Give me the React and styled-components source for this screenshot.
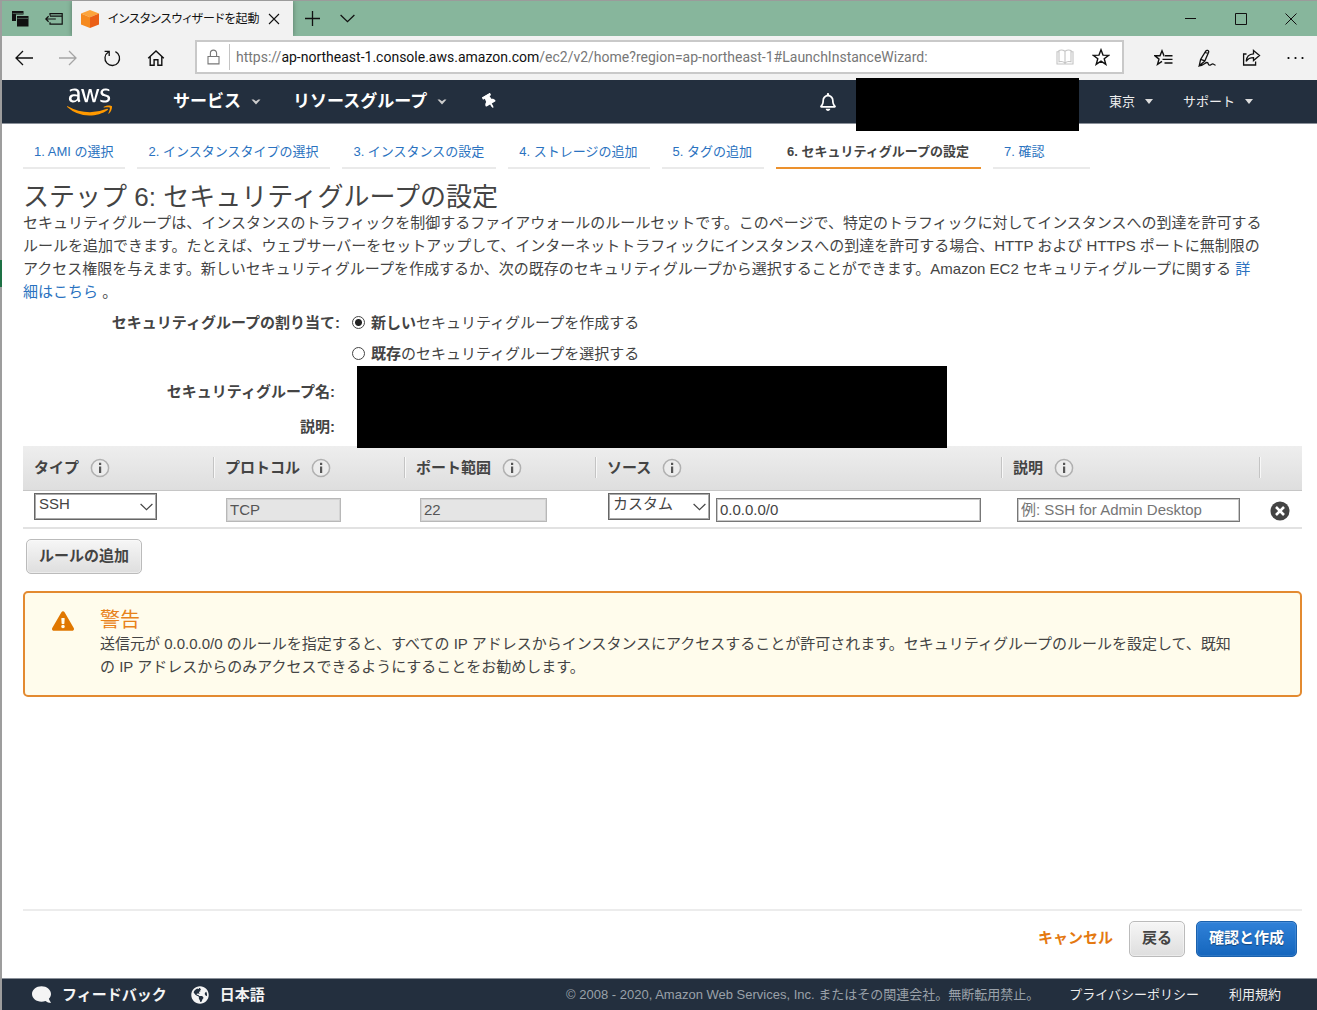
import React from "react";
import styled, { createGlobalStyle, css } from "styled-components";
import {
  FaAws,
  FaThumbtack,
  FaRegBell,
  FaComment,
  FaGlobeAmericas,
  FaExclamationTriangle,
} from "react-icons/fa";

const sans = `"Liberation Sans", "Noto Sans CJK JP", sans-serif`;
const ui = `"Open Sans", "Noto Sans CJK JP", sans-serif`;

const GlobalStyle = createGlobalStyle`
  *, *::before, *::after { box-sizing: border-box; }
  body { margin: 0; background: #fff; }
  button, input, select { font: inherit; color: inherit; margin: 0; }
  a { text-decoration: none; }
`;

const Window = styled.div`
  min-height: 100vh;
  display: flex;
  flex-direction: column;
  padding-left: 2px;
  border-top: 1px solid #9b9b9b;
  background: linear-gradient(#9d9d9d 0 259px, #1e7145 259px 286px, #9d9d9d 286px) 0 0 / 2px 100% no-repeat;
  font: 15px/23px ${sans};
  color: #444;
`;

/* ---------- browser chrome ---------- */

const TitleBar = styled.header`
  display: flex;
  align-items: stretch;
  height: 35px;
  background: #87b69c;
  color: #111;
`;

const TitleTools = styled.div`
  display: flex;
  width: 70px;
`;

const IconButton = styled.button`
  display: flex;
  flex: none;
  align-items: center;
  justify-content: center;
  width: ${(p) => p.$w || 44}px;
  padding: 0;
  border: 0;
  background: none;
  color: ${(p) => p.$color || "#111"};
`;

const BrowserTab = styled.div`
  display: flex;
  align-items: center;
  width: 221px;
  padding: 0 5px 0 8px;
  background: #f2f2f2;
  box-shadow: 0 0 5px rgba(0, 0, 0, 0.35);
  clip-path: inset(0 -6px 0 -6px);
`;

const TabTitle = styled.span`
  flex: 1;
  margin-left: 8px;
  white-space: nowrap;
  font: 12px/20px ${ui};
  font-feature-settings: "palt";
  color: #111;
`;

const WindowControls = styled.div`
  display: flex;
  margin: 0 1px 0 auto;
`;

const Toolbar = styled.div`
  display: flex;
  align-items: stretch;
  height: 44px;
  background: #f2f2f2;
`;

const AddressBar = styled.div`
  display: flex;
  flex: 1;
  min-width: 0;
  align-items: center;
  height: 34px;
  margin: 4px 17px;
  padding-right: 3px;
  border: 2px solid #c9c9c9;
  background: #fff;
`;

const LockSlot = styled.span`
  display: flex;
  align-items: center;
  justify-content: center;
  width: 33px;
  height: 26px;
  border-right: 1px solid #c4c4c4;
`;

const Url = styled.div`
  flex: 1;
  min-width: 0;
  padding-left: 6px;
  overflow: hidden;
  white-space: nowrap;
  font: 14px/20px Roboto, sans-serif;
  color: #777;

  b {
    font-weight: 400;
    color: #111;
  }
`;

/* ---------- console navigation ---------- */

const NavBar = styled.nav`
  display: flex;
  align-items: center;
  height: 44px;
  padding: 0 64px 0 65px;
  border-bottom: 1px solid #8a9099;
  background: #232f3e;
  color: #fff;
`;

const Logo = styled.a`
  display: flex;
  margin-right: 61px;

  svg {
    width: 45px;
    height: 36px;
    fill: url(#awsFill);
  }
`;

const NavItem = styled.button`
  display: flex;
  align-items: center;
  gap: 10px;
  padding: 0;
  border: 0;
  background: none;
  white-space: nowrap;
  ${(p) =>
    p.$small
      ? css`
          margin-left: 30px;
          font-size: 13px;
          color: #eee;
        `
      : css`
          margin-right: 32px;
          font-size: 17px;
          font-weight: 700;
          color: #fff;
        `}
`;

const NavEnd = styled.div`
  display: flex;
  align-items: center;
  margin-left: auto;
`;

const Account = styled.div`
  position: relative;
  width: 223px;
  height: 44px;
  margin-left: 19px;
`;

const Redaction = styled.div`
  position: absolute;
  inset: ${(p) => p.$inset};
  background: #000;
`;

/* ---------- wizard ---------- */

const Main = styled.main`
  display: flex;
  flex: 1;
  flex-direction: column;
  padding: 16px 15px 0 21px;
`;

const Steps = styled.ol`
  display: flex;
  gap: 12px;
  margin: 0 0 14px;
  padding: 0;
  list-style: none;
`;

const Step = styled.li`
  padding: 0 12px 3px 11px;
  border-bottom: 2px solid ${(p) => (p.$current ? "#ec912d" : "#eaeaea")};
  font-size: 13px;
  font-weight: ${(p) => (p.$current ? 700 : 400)};
  line-height: 24px;
  white-space: nowrap;

  &:last-child {
    padding-right: 46px;
  }
`;

const TextLink = styled.a`
  color: #2a72c0;
`;

const Title = styled.h1`
  margin: 0;
  font-size: 26px;
  font-weight: 400;
  line-height: 28px;
`;

const Lead = styled.p`
  margin: 0 0 4px;
`;

const Form = styled.div`
  margin-bottom: 2px;
`;

const Assign = styled.fieldset`
  display: grid;
  grid-template-columns: 317px 1fr;
  align-items: center;
  margin: 0 0 5px;
  padding: 0;
  border: 0;
  line-height: 31px;
`;

const Caption = styled.span`
  grid-row: 1;
  text-align: right;
  font-weight: 700;
`;

const Option = styled.label`
  display: flex;
  grid-column: 2;
  align-items: center;
  padding-left: 12px;

  input {
    appearance: none;
    width: 13px;
    height: 13px;
    margin: 0 6px 0 0;
    border: 1px solid #444;
    border-radius: 50%;
    background: #fff;
  }

  input:checked {
    background: radial-gradient(circle, #222 0 3px, #fff 4px);
  }
`;

const Details = styled.div`
  position: relative;
`;

const DetailRow = styled.div`
  width: 312px;
  line-height: 35px;
  text-align: right;
  font-weight: 700;
`;

const CoveredFields = styled.div`
  position: absolute;
  top: -8px;
  left: 334px;
  width: 590px;
  height: 82px;
  background: #000;
`;

const Rules = styled.table`
  width: 100%;
  table-layout: fixed;
  border-collapse: collapse;
`;

const HeadCell = styled.th`
  height: 44px;
  padding: 0;
  border-bottom: 1px solid #c6c6c6;
  background: linear-gradient(#eee, #dedede);
  text-align: left;
`;

const HeadLabel = styled.span`
  display: flex;
  align-items: center;
  gap: 11px;
  height: 21px;
  padding-left: 11px;
  border-left: ${(p) => (p.$first ? "0" : "1px solid #c4c4c4")};
  box-shadow: ${(p) => (p.$first ? "none" : "inset 1px 0 #f8f8f8")};
`;

const Cell = styled.td`
  height: 38px;
  padding: 2px 0 0 ${(p) => p.$pad}px;
  border-bottom: 2px solid #e2e2e2;
  vertical-align: top;
`;

const CellRow = styled.div`
  display: flex;
  align-items: flex-start;
  gap: 6px;
`;

const SelectBox = styled.span`
  display: block;
  position: relative;
  flex: none;
  width: ${(p) => p.$w}px;

  select {
    display: block;
    width: 100%;
    height: 27px;
    padding: 0 0 4px 4px;
    appearance: none;
    border: 1px solid #666;
    outline: 1px solid #aaa;
    outline-offset: -2px;
    border-radius: 0;
    background: #fff;
    line-height: 20px;
  }

  svg {
    position: absolute;
    right: 4px;
    top: 10px;
    pointer-events: none;
  }
`;

const Field = styled.input`
  display: block;
  width: ${(p) => p.$w};
  height: 24px;
  padding: 0 3px;
  border: 1px solid #777;
  outline: 1px solid #c8c8c8;
  outline-offset: -2px;
  border-radius: 0;
  background: #fff;

  &::placeholder {
    color: #757575;
  }

  &:disabled {
    border-color: #b8b8b8;
    outline-color: #d4d4d4;
    background: #e5e5e5;
    color: #555;
  }
`;

const FieldSlot = styled.div`
  display: flex;
  align-items: center;
  min-height: 24px;
  margin-top: 5px;
`;

const RemoveSlot = styled(FieldSlot)`
  min-height: 26px;
`;

const Button = styled.button`
  height: ${(p) => p.$h}px;
  padding: 0 12px 3px;
  border: 1px solid ${(p) => (p.$primary ? "#1a61ad" : "#bbb")};
  border-radius: 5px;
  background: ${(p) => (p.$primary ? "linear-gradient(#3081d8, #1566bd)" : "linear-gradient(#f6f6f6, #dedede)")};
  box-shadow: inset 0 0 0 1px ${(p) => (p.$primary ? "rgba(255,255,255,.1)" : "rgba(255,255,255,.4)")};
  color: ${(p) => (p.$primary ? "#fff" : "#444")};
  font-weight: 700;
  white-space: nowrap;
  text-shadow: ${(p) => (p.$primary ? "0 1px 1px rgba(0,0,0,.4)" : "none")};
`;

const AddRow = styled.div`
  display: flex;
  padding: 10px 3px 17px;
`;

const Warning = styled.section`
  display: flex;
  gap: 26px;
  padding: 15px 27px 17px;
  border: 2px solid #e38a30;
  border-radius: 5px;
  background: #fffcec;

  > svg {
    flex: none;
    margin-top: 2px;
    color: #e07700;
  }

  h2 {
    margin: 0;
    font-size: 20px;
    font-weight: 400;
    line-height: 24px;
    color: #e8821a;
  }

  p {
    margin: 0;
  }
`;

const Actions = styled.div`
  display: flex;
  align-items: center;
  justify-content: flex-end;
  gap: 11px;
  margin-top: auto;
  padding: 10px 5px 21px;
  border-top: 2px solid #ececec;
`;

const Cancel = styled.a`
  margin-right: 5px;
  padding-bottom: 3px;
  color: #e47911;
  font-weight: 700;
`;

const Footer = styled.footer`
  display: flex;
  align-items: center;
  height: 32px;
  padding: 0 36px 0 30px;
  border-top: 1px solid #8a9099;
  background: #232f3e;
  color: #eee;
  font-size: 13px;
`;

const FooterTool = styled.button`
  display: flex;
  align-items: center;
  gap: 11px;
  margin-right: 24px;
  padding: 0;
  border: 0;
  background: none;
  color: #f4f4f4;
  font-size: 15px;
  font-weight: 700;
  white-space: nowrap;
`;

const Legal = styled.small`
  margin-left: auto;
  color: #9aa1a9;
  font-size: 13px;
`;

const FooterLink = styled.a`
  margin-left: 30px;
  color: #eee;
`;

/* ---------- drawings ---------- */

function Line({ w = 18, h = 18, sw = 1.3, children, ...rest }) {
  return (
    <svg width={w} height={h} viewBox={`0 0 ${w} ${h}`} fill="none" stroke="currentColor" strokeWidth={sw} {...rest}>
      {children}
    </svg>
  );
}

const Caret = ({ solid }) =>
  solid ? (
    <svg width="8" height="5" viewBox="0 0 8 5" aria-hidden="true">
      <path d="M0 0h8L4 5z" fill="#ddd" />
    </svg>
  ) : (
    <svg width="10" height="6" viewBox="0 0 10 6" aria-hidden="true">
      <path d="M.5.5h2.2L5 2.300 7.300.5h2.200L5 5.500z" fill="#ccc" />
    </svg>
  );

const Chevron = () => (
  <Line w={13} h={8} sw={1.2}>
    <path d="M.6 1l5.9 5.6L12.4 1" stroke="#444" />
  </Line>
);

const Info = () => (
  <svg width="20" height="20" viewBox="0 0 20 20" role="img" aria-label="情報">
    <circle cx="10" cy="10" r="8.600" fill="#ececec" stroke="#b0b0b0" strokeWidth="1.500" />
    <path d="M9 8.400h2.200v6.600H9z M9 4.800h2.200v2.200H9z" fill="#555" />
  </svg>
);

const Cube = () => (
  <svg width="20" height="20" viewBox="0 0 20 20" aria-hidden="true">
    <path d="M10 1l9 3.4-9 3.8-9-3.8z" fill="#fca43c" />
    <path d="M1 4.4l9 3.8V19l-9-3.6z" fill="#f58a1f" />
    <path d="M19 4.4l-9 3.8V19l9-3.6z" fill="#ea5f17" />
  </svg>
);

const columns = ["タイプ", "プロトコル", "ポート範囲", "ソース", "説明"];
const steps = [
  "1. AMI の選択",
  "2. インスタンスタイプの選択",
  "3. インスタンスの設定",
  "4. ストレージの追加",
  "5. タグの追加",
  "6. セキュリティグループの設定",
  "7. 確認",
];

function BrowserChrome() {
  return (
    <>
      <TitleBar>
        <TitleTools>
          <IconButton $w={36} aria-label="保存したタブ">
            <svg width="17" height="16" viewBox="0 0 17 16">
              <path d="M0 0h11.5v3.6H4V10H0z" fill="#111" />
              <path d="M5 5h11.5v10.5H5z" fill="#111" />
              <path d="M5.4 7.4h10.8M.6 2.4h10.6" stroke="#6f9580" strokeWidth=".6" />
            </svg>
          </IconButton>
          <IconButton $w={32} aria-label="タブを保存して閉じる">
            <Line w={18} h={14} sw={1.2}>
              <path d="M5 3.5V1.6h12.2v10.6H5v-2M5 4.2h12M.8 7h10M3.6 4.3L.8 7l2.8 2.7" />
            </Line>
          </IconButton>
        </TitleTools>
        <BrowserTab>
          <Cube />
          <TabTitle>インスタンスウィザードを起動</TabTitle>
          <IconButton $w={28} aria-label="タブを閉じる">
            <Line w={12} h={12} sw={1.1}><path d="M1 1l10 10M11 1L1 11" /></Line>
          </IconButton>
        </BrowserTab>
        <IconButton $w={38} aria-label="新しいタブ">
          <Line w={15} h={15}><path d="M7.5 0v15M0 7.5h15" /></Line>
        </IconButton>
        <IconButton $w={32} aria-label="タブプレビュー">
          <Line w={15} h={9}><path d="M.6 1l6.9 6.6L14.4 1" /></Line>
        </IconButton>
        <WindowControls>
          <IconButton $w={50} aria-label="最小化">
            <Line w={11} h={11} sw={1}><path d="M0 5.5h11" /></Line>
          </IconButton>
          <IconButton $w={51} aria-label="最大化">
            <Line w={12} h={12} sw={1}><path d="M.5.5h11v11H.5z" /></Line>
          </IconButton>
          <IconButton $w={50} aria-label="閉じる">
            <Line w={12} h={12} sw={1}><path d="M.5.5l11 11M11.5.5l-11 11" /></Line>
          </IconButton>
        </WindowControls>
      </TitleBar>

      <Toolbar>
        <IconButton aria-label="戻る">
          <Line w={18} h={16}><path d="M1 8h17M8 1L1 8l7 7" /></Line>
        </IconButton>
        <IconButton $color="#a5a5a5" aria-label="進む">
          <Line w={18} h={16}><path d="M0 8h17M10 1l7 7-7 7" /></Line>
        </IconButton>
        <IconButton aria-label="更新">
          <Line w={18} h={18}>
            <path d="M5.4 3A7.3 7.3 0 1 0 12.4 2.6M1.6 2.3h4.6v4.6" />
          </Line>
        </IconButton>
        <IconButton aria-label="ホーム">
          <Line w={18} h={18} sw={1.4}>
            <path d="M1.2 9.3L9 2l7.8 7.3M3.2 7.6v8.7h3.9v-5.6h3.8v5.6h3.9V7.6" />
          </Line>
        </IconButton>
        <AddressBar>
          <LockSlot>
            <Line w={13} h={16} sw={1.1} stroke="#777">
              <path d="M1 7.5h11v7.4H1zM3.4 7.5V4.2a3.1 3.1 0 0 1 6.2 0v3.3" />
            </Line>
          </LockSlot>
          <Url>
            https://<b>ap-northeast-1.console.aws.amazon.com</b>/ec2/v2/home?region=ap-northeast-1#LaunchInstanceWizard:
          </Url>
          <IconButton $w={36} $color="#c4c4c4" aria-label="読み取りビュー">
            <Line w={18} h={16} sw={1.1}>
              <path d="M9 2.2v12M9 2.2C7 .9 4.5 .9 3 1.4v11.4c2-.5 4.4-.3 6 1.2 1.6-1.5 4-1.7 6-1.2V1.4c-1.5-.5-4-.5-6 .8M3 2.8H1v12.200h16V2.8h-2" />
            </Line>
          </IconButton>
          <IconButton $w={36} aria-label="お気に入りに追加">
            <Line w={18} h={18} sw={1.4}>
              <path d="M9 1.800l2 5.300 5.700.2-4.500 3.500 1.600 5.500L9 13.100l-4.800 3.200 1.600-5.500L1.300 7.300l5.700-.2z" />
            </Line>
          </IconButton>
        </AddressBar>
        <IconButton aria-label="ハブ">
          <Line w={19} h={18} sw={1.4}>
            <path d="M10.5 6.8H10l-2-5-2 5H1l4 3.3-1.500 5.300L8 12.400M11 6.800h7.500M8.500 10.400h10M10.500 14h8" />
          </Line>
        </IconButton>
        <IconButton aria-label="メモの追加">
          <Line w={18} h={18} sw={1.3}>
            <path d="M1.200 16.800L2.600 10.500 7.600 2.300c1-1.700 3.600-1 3 1L6.800 12 1.200 16.800zM2.800 10.300l3.800 1.600M7 3.500l3.400 1M1.200 16.800c4 0 5.800-3.300 7.800-3.300s.6 2.700 2.300 2.700 2.200-1.400 3.400-1.400 1.200 1.500 2.800 1.200" />
          </Line>
        </IconButton>
        <IconButton aria-label="共有">
          <Line w={19} h={18} sw={1.3}>
            <path d="M4.500 5H1.600v11h12v-3.500M11.500 1.500l6 5-6 5V8.600c-3.500 0-5.600 1-7.300 3.700.3-4.500 2.800-7.300 7.300-7.500z" />
          </Line>
        </IconButton>
        <IconButton aria-label="設定など">
          <svg width="17" height="4" viewBox="0 0 17 4">
            <circle cx="1.500" cy="2" r="1.100" />
            <circle cx="8.500" cy="2" r="1.100" />
            <circle cx="15.500" cy="2" r="1.100" />
          </svg>
        </IconButton>
      </Toolbar>
    </>
  );
}

const Defs = styled.svg`
  position: absolute;
`;

function ConsoleNav() {
  return (
    <NavBar>
      <Defs width="0" height="0" aria-hidden="true">
        <defs>
          <linearGradient id="awsFill" x1="0" y1="0" x2="0" y2="1">
            <stop offset="0.58" stopColor="#fff" />
            <stop offset="0.58" stopColor="#f90" />
          </linearGradient>
        </defs>
      </Defs>
      <Logo href="#home" aria-label="AWS">
        <FaAws />
      </Logo>
      <NavItem>サービス <Caret /></NavItem>
      <NavItem>リソースグループ <Caret /></NavItem>
      <IconButton $w={20} $color="#fff" aria-label="ピン留め">
        <FaThumbtack size={15} transform="rotate(-30)" />
      </IconButton>
      <NavEnd>
        <IconButton $w={18} $color="#fff" aria-label="通知">
          <FaRegBell size={18} />
        </IconButton>
        <Account>
          <Redaction $inset="-2px 0 -7px 0" />
        </Account>
        <NavItem $small>東京 <Caret solid /></NavItem>
        <NavItem $small>サポート <Caret solid /></NavItem>
      </NavEnd>
    </NavBar>
  );
}

function RuleTable() {
  return (
    <Rules>
      <colgroup>
        <col width="190" />
        <col width="191" />
        <col width="191" />
        <col />
        <col width="258" />
        <col width="43" />
      </colgroup>
      <thead>
        <tr>
          {columns.map((name, i) => (
            <HeadCell key={name} scope="col">
              <HeadLabel $first={i === 0}>{name} <Info /></HeadLabel>
            </HeadCell>
          ))}
          <HeadCell aria-label="削除"><HeadLabel /></HeadCell>
        </tr>
      </thead>
      <tbody>
        <tr>
          <Cell $pad={11}>
            <SelectBox $w={123}>
              <select aria-label="タイプ" defaultValue="SSH"><option>SSH</option></select>
              <Chevron />
            </SelectBox>
          </Cell>
          <Cell $pad={13}><FieldSlot><Field $w="115px" aria-label="プロトコル" defaultValue="TCP" disabled /></FieldSlot></Cell>
          <Cell $pad={16}><FieldSlot><Field $w="127px" aria-label="ポート範囲" defaultValue="22" disabled /></FieldSlot></Cell>
          <Cell $pad={13}>
            <CellRow>
              <SelectBox $w={102}>
                <select aria-label="ソース" defaultValue="カスタム"><option>カスタム</option></select>
                <Chevron />
              </SelectBox>
              <FieldSlot><Field $w="265px" aria-label="CIDR" defaultValue="0.0.0.0/0" /></FieldSlot>
            </CellRow>
          </Cell>
          <Cell $pad={16}><FieldSlot><Field $w="223px" aria-label="説明" placeholder="例: SSH for Admin Desktop" /></FieldSlot></Cell>
          <Cell $pad={11}>
            <RemoveSlot>
              <IconButton $w={20} aria-label="ルールを削除">
                <svg width="20" height="20" viewBox="0 0 20 20">
                  <circle cx="10" cy="10" r="9.500" fill="#444" />
                  <path d="M6 6l8 8M14 6l-8 8" stroke="#fff" strokeWidth="2.600" />
                </svg>
              </IconButton>
            </RemoveSlot>
          </Cell>
        </tr>
      </tbody>
    </Rules>
  );
}

export default function App() {
  return (
    <Window>
      <GlobalStyle />
      <BrowserChrome />
      <ConsoleNav />
      <Main>
        <Steps>
          {steps.map((s, i) => (
            <Step key={s} $current={i === 5}>
              {i === 5 ? s : <TextLink href={`#step${i + 1}`}>{s}</TextLink>}
            </Step>
          ))}
        </Steps>
        <Title>ステップ 6: セキュリティグループの設定</Title>
        <Lead>
          セキュリティグループは、インスタンスのトラフィックを制御するファイアウォールのルールセットです。このページで、特定のトラフィックに対してインスタンスへの到達を許可する<br />
          ルールを追加できます。たとえば、ウェブサーバーをセットアップして、インターネットトラフィックにインスタンスへの到達を許可する場合、HTTP および HTTPS ポートに無制限の<br />
          アクセス権限を与えます。新しいセキュリティグループを作成するか、次の既存のセキュリティグループから選択することができます。Amazon EC2 セキュリティグループに関する{" "}
          <TextLink href="#learn">詳<br />細はこちら</TextLink> 。
        </Lead>

        <Form>
          <Assign aria-labelledby="assign">
            <Caption id="assign">セキュリティグループの割り当て:</Caption>
            <Option><input type="radio" name="group" defaultChecked /><span><b>新しい</b>セキュリティグループを作成する</span></Option>
            <Option><input type="radio" name="group" /><span><b>既存</b>のセキュリティグループを選択する</span></Option>
          </Assign>
          <Details>
            <DetailRow>セキュリティグループ名:</DetailRow>
            <DetailRow>説明:</DetailRow>
            <CoveredFields />
          </Details>
        </Form>

        <RuleTable />
        <AddRow><Button $h={35}>ルールの追加</Button></AddRow>

        <Warning>
          <FaExclamationTriangle size={22} />
          <div>
            <h2>警告</h2>
            <p>
              送信元が 0.0.0.0/0 のルールを指定すると、すべての IP アドレスからインスタンスにアクセスすることが許可されます。セキュリティグループのルールを設定して、既知<br />
              の IP アドレスからのみアクセスできるようにすることをお勧めします。
            </p>
          </div>
        </Warning>

        <Actions>
          <Cancel href="#cancel">キャンセル</Cancel>
          <Button $h={36}>戻る</Button>
          <Button $h={36} $primary>確認と作成</Button>
        </Actions>
      </Main>
      <Footer>
        <FooterTool><FaComment size={19} transform="scale(-1 1)" /> フィードバック</FooterTool>
        <FooterTool><FaGlobeAmericas size={18} /> 日本語</FooterTool>
        <Legal>© 2008 - 2020, Amazon Web Services, Inc. またはその関連会社。無断転用禁止。</Legal>
        <FooterLink href="#privacy">プライバシーポリシー</FooterLink>
        <FooterLink href="#terms">利用規約</FooterLink>
      </Footer>
    </Window>
  );
}
